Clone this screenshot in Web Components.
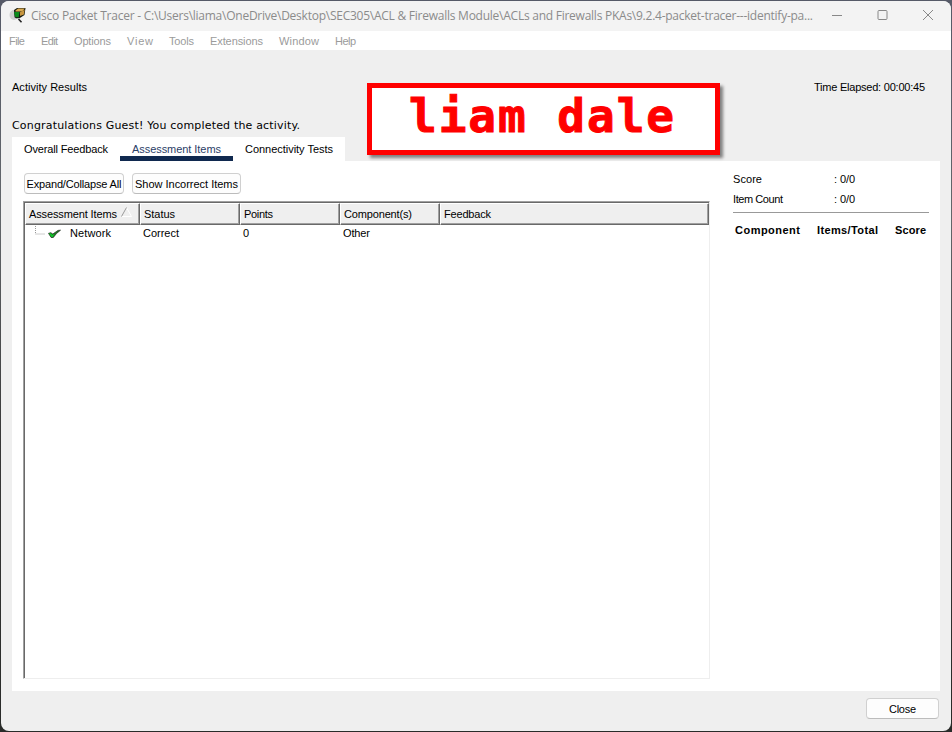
<!DOCTYPE html>
<html lang="en">
<head>
<meta charset="utf-8">
<title>Cisco Packet Tracer</title>
<style>
html,body{margin:0;height:100%;overflow:hidden}
body{background:linear-gradient(#565a68,#62666a 30%,#383838 60%,#292b29);font:11px/14px "Liberation Sans",Arial,sans-serif;color:#000}
</style>
</head>
<body>
<packet-window></packet-window>
<script>
const define = (name, html, ready) => customElements.define(name, class extends HTMLElement {
  constructor() {
    super();
    const t = document.createElement('template');
    t.innerHTML = html;
    this.attachShadow({mode: 'open'}).append(t.content.cloneNode(true));
  }
  connectedCallback() { if (ready) ready(this); }
});

/* A one-line label whose tracking is adjusted to fill the width given in "w". */
define('fit-label', `<style>:host{display:block;flex:none;white-space:pre}span{display:inline-block}</style><span><slot></slot></span>`, el => {
  const s = el.shadowRoot.querySelector('span'), w = +el.getAttribute('w');
  const n = el.textContent.length;
  el.style.width = w + 'px';
  s.style.letterSpacing = (w - s.getBoundingClientRect().width) / Math.max(1, n - 1) + 'px';
});

define('app-icon', `<style>:host{display:block;width:17px;height:16px}svg{display:block}</style>
<svg width="17" height="16" viewBox="0 0 17 16"><ellipse cx="5" cy="8" rx="4.5" ry="5" fill="#d0d0d0"/><path d="M5 3 8 1h8.5l-1 7-5 3.2H7l-1.5-1Z" fill="#171c13"/><path d="m6.5 3.6 2.5-2h6.8l-2.6 3H6.5Z" fill="#d9a950"/><path d="M11 5.2 15.6 2.8l-.7 4.6-3.9 1.6Z" fill="#c8963f"/><path d="M5 5h5.5l-.8 5.3-3.4-.2Z" fill="#0a8a1a"/><path d="m9.5 12 3 3.2" stroke="#222" stroke-width="1.6"/></svg>`);

define('title-bar', `<style>:host{display:flex;box-sizing:border-box;height:30px;background:#f3f3f3;padding:0 17px 0 8px;align-items:flex-start;color:#8b8b8b}
app-icon{margin:6px 5px 0 0}fit-label{font:12px/16px "Open Sans","Noto Sans",sans-serif;margin-top:7px}
.b{display:flex;margin-left:auto;gap:33.5px;margin-top:7px}svg{display:block;fill:none;stroke:#888}</style>
<app-icon></app-icon><fit-label w="782">Cisco Packet Tracer - C:\\Users\\liama\\OneDrive\\Desktop\\SEC305\\ACL &amp; Firewalls Module\\ACLs and Firewalls PKAs\\9.2.4-packet-tracer---identify-pa...</fit-label>
<div class="b"><svg width="12" height="14"><path d="M1 7.5h10"/></svg><svg width="12" height="14"><rect x="1" y="2.5" width="9" height="9" rx="1"/></svg><svg width="12" height="14"><path d="m1 2 10 10M11 2 1 12"/></svg></div>`);

define('menu-bar', `<style>:host{display:flex;box-sizing:border-box;height:19px;background:#fff;padding:3px 0 0 8px;gap:16px;color:#9b9b9b}</style>
<fit-label w="16">File</fit-label><fit-label w="17">Edit</fit-label><fit-label w="37">Options</fit-label><fit-label w="26">View</fit-label><fit-label w="25">Tools</fit-label><fit-label w="53">Extensions</fit-label><fit-label w="40">Window</fit-label><fit-label w="21">Help</fit-label>`);

define('push-button', `<style>:host{display:flex;box-sizing:border-box;justify-content:center;align-items:center;height:21px;border:1px solid #d0d0d0;border-bottom-color:#bcbcbc;border-radius:4px;background:#fdfdfd;padding-top:1px}</style><slot></slot>`);

define('tab-item', `<style>:host{display:block;box-sizing:border-box;height:24px;padding:5px 12px 0;background:#fff}:host([selected]){color:#2b4067;border-bottom:5px solid #10294f}</style><slot></slot>`);

define('name-tag', `<style>:host{position:absolute;left:366px;top:82px;width:353px;height:72px;box-sizing:border-box;border:5px solid red;background:#fff;box-shadow:3px 3px 3px #0007;color:red;padding-left:37px}
fit-label{font:bold 46px/57px "DejaVu Sans Mono",monospace;-webkit-text-stroke:1px red}</style><fit-label w="265">liam dale</fit-label>`);

define('column-head', `<style>:host{display:flex;flex:none;box-sizing:border-box;height:22px;padding:3px 0 0 3px;background:#efefef;border:1px solid #fff;border-right-color:#696969;border-bottom-color:#696969;box-shadow:inset -1px -1px #a0a0a0}</style><slot></slot>`);

define('items-tree', `<style>:host{display:block;box-sizing:border-box;width:687px;height:478px;border:1px solid #a0a0a0;border-right-color:#eee;border-bottom-color:#eee;background:#fff}
.in{box-sizing:border-box;height:476px;border-left:1px solid #696969;border-top:1px solid #696969}
.h{display:grid;grid-template-columns:115px 100px 100px 100px 269px}
.r{display:grid;grid-template-columns:118px 100px 100px 100px 1fr;height:18px;padding-top:1px}
.n{display:flex}.n svg{flex:none;width:45px;height:16px;margin-top:-1px}.s{display:block;flex:none;margin:0 0 0 4px}</style>
<div class="in"><div class="h"><column-head><fit-label w="88">Assessment Items</fit-label><svg class="s" width="12" height="11" viewBox="0 0 12 11"><path d="M.5 9.5h10L5.5.5" fill="none" stroke="#fff"/><path d="m.5 9.5 5-9" stroke="#999"/></svg></column-head><column-head><fit-label w="31">Status</fit-label></column-head><column-head><fit-label w="29">Points</fit-label></column-head><column-head><fit-label w="68">Component(s)</fit-label></column-head><column-head><fit-label w="47">Feedback</fit-label></column-head></div>
<div class="r"><div class="n"><svg viewBox="0 0 45 16"><path d="M10.5 1v8h10" fill="none" stroke="#999" stroke-dasharray="1 1"/><path d="m23.5 8.3 2.3-.6 2 1.3 5.2-3.6 2.5-.2-4 3.3-3.2 4h-2.2Z" fill="#1c7a20" stroke="#202820" stroke-width=".7"/><path d="m24 8.6 1.6-.3 2 1.6 2-1.3-1.8 3.3h-1.5Z" fill="#10c52b"/></svg><fit-label w="41">Network</fit-label></div><fit-label w="36">Correct</fit-label><fit-label w="6">0</fit-label><fit-label w="27">Other</fit-label></div></div>`);

define('score-panel', `<style>:host{display:block;width:196px;padding-top:11px}
.r{display:grid;grid-template-columns:101px 1fr;height:20px}.line{height:1px;background:#999}
.h{display:flex;gap:17px;padding:10px 0 0 2px;font-weight:bold}</style>
<div class="r"><fit-label w="29">Score</fit-label><fit-label w="21">: 0/0</fit-label></div><div class="r"><fit-label w="50">Item Count</fit-label><fit-label w="21">: 0/0</fit-label></div><div class="line"></div><div class="h"><fit-label w="65">Component</fit-label><fit-label w="61">Items/Total</fit-label><fit-label w="31">Score</fit-label></div>`);

define('packet-window', `<style>:host{display:flex;flex-direction:column;position:relative;box-sizing:border-box;width:950px;height:730px;margin:1px;background:#efefef;border-radius:8px;overflow:hidden}
.top{display:flex;justify-content:space-between;padding:30px 26px 0 11px}
.c{font:11px/16px "DejaVu Sans",Verdana,sans-serif;margin:24px 0 0 11px}
.tabs{display:flex;margin:3px 0 0 11px}
.panel{display:flex;box-sizing:border-box;height:530px;width:928px;margin-left:11px;background:#fff;padding-left:11px}
.main{width:710px;padding-top:12px}.bs{display:flex;gap:8px;margin:0 0 7px 1px}
.foot{display:flex;justify-content:flex-end;padding:7px 12px 0}</style>
<title-bar></title-bar><menu-bar></menu-bar>
<div class="top"><fit-label w="75">Activity Results</fit-label><fit-label w="111">Time Elapsed: 00:00:45</fit-label></div>
<fit-label class="c" w="288">Congratulations Guest! You completed the activity.</fit-label>
<div class="tabs"><tab-item><fit-label w="84">Overall Feedback</fit-label></tab-item><tab-item selected><fit-label w="89">Assessment Items</fit-label></tab-item><tab-item><fit-label w="88">Connectivity Tests</fit-label></tab-item></div>
<div class="panel"><div class="main"><div class="bs"><push-button style="width:100px"><fit-label w="95">Expand/Collapse All</fit-label></push-button><push-button style="width:109px"><fit-label w="103">Show Incorrect Items</fit-label></push-button></div><items-tree></items-tree></div><score-panel></score-panel></div>
<div class="foot"><push-button style="width:73px"><fit-label w="27">Close</fit-label></push-button></div>
<name-tag></name-tag>`);
</script>
</body>
</html>
